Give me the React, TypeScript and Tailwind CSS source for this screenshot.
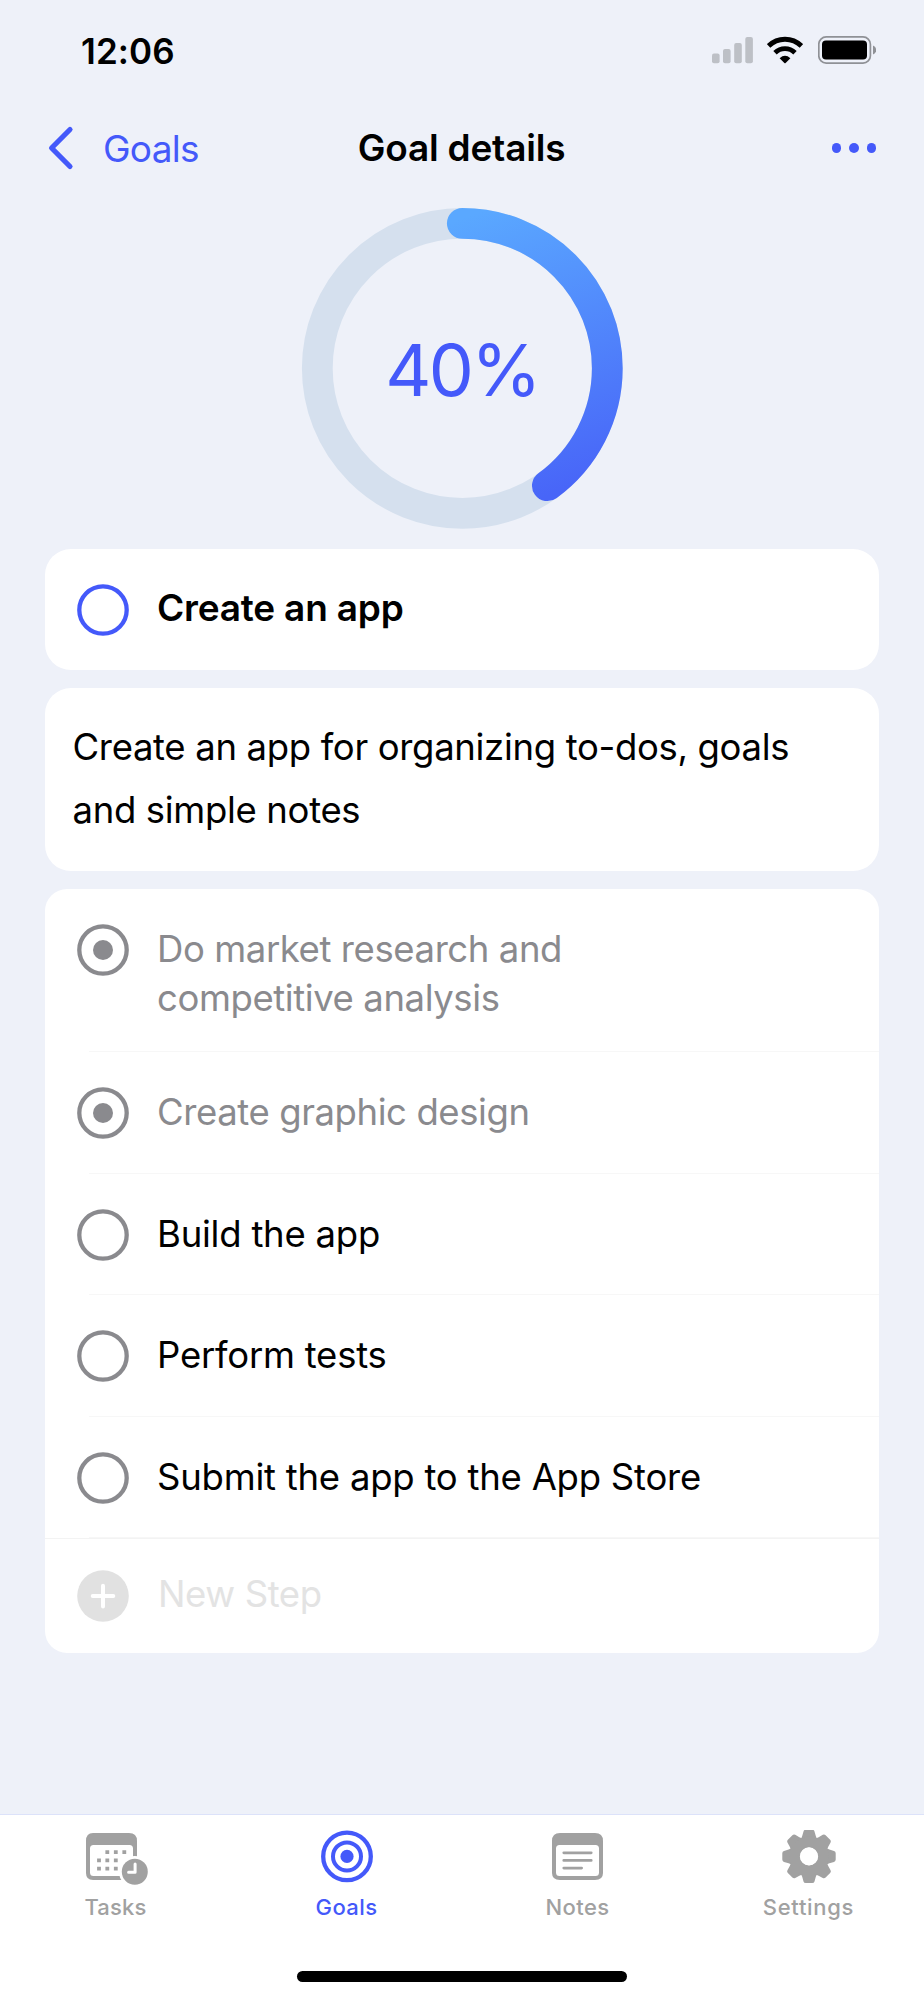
import React from "react";

const steps = [
  { title: "Do market research and\ncompetitive analysis", done: true },
  { title: "Create graphic design", done: true },
  { title: "Build the app", done: false },
  { title: "Perform tests", done: false },
  { title: "Submit the app to the App Store", done: false },
];

function StatusBar() {
  return (
    <div className="flex h-[100px] items-center justify-between pl-[81px] pr-[48px]">
      <span className="pt-px text-[35px] leading-[50px] font-semibold tracking-[0.1px]">12:06</span>
      <div className="flex items-center">
        <svg width="41" height="28" viewBox="0 0 41 28" fill="#bdc0c6" className="mr-[14px]">
          <rect x="0" y="17.5" width="7.6" height="9.8" rx="2" />
          <rect x="11" y="13" width="7.6" height="14.3" rx="2" />
          <rect x="22.2" y="7" width="7.6" height="20.3" rx="2" />
          <rect x="33.3" y="1" width="7.6" height="26.3" rx="2" />
        </svg>
        <svg width="36" height="28" viewBox="0 0 36 28" className="mr-[15px]">
          <path d="M1.6 9.9A23.4 23.4 0 0 1 34.4 9.9" fill="none" stroke="#000" strokeWidth="4.9" />
          <path d="M8 16.7A14.4 14.4 0 0 1 28 16.7" fill="none" stroke="#000" strokeWidth="4.9" />
          <path d="M12.6 22.2Q18 17.4 23.4 22.2L18.6 27Q18 27.6 17.4 27Z" fill="#000" />
        </svg>
        <svg width="58" height="28" viewBox="0 0 58 28">
          <rect x="0.8" y="0.9" width="51.6" height="26.2" rx="7.4" fill="none" stroke="#8f9196" strokeWidth="1.7" />
          <rect x="4" y="4.6" width="45" height="18.8" rx="4" fill="#000" />
          <path d="M55 9.5Q58.2 10.9 58.2 14T55 18.5Z" fill="#8f9196" />
        </svg>
      </div>
    </div>
  );
}

function NavBar() {
  return (
    <div className="grid h-[96px] grid-cols-3 items-center pr-[48px] pl-[47px]">
      <div className="flex items-center">
        <svg width="27" height="46" viewBox="0 0 27 46" fill="none">
          <path d="M23 4.5L4.6 23L23 41.5" stroke="#4459fa" strokeWidth="5.2" strokeLinecap="round" strokeLinejoin="round" />
        </svg>
        <span className="ml-[29px] pt-px text-[37px] leading-[50px] tracking-[-0.75px] text-[#4459fa]">Goals</span>
      </div>
      <h1 className="text-center text-[37px] leading-[50px] font-semibold tracking-[-0.2px] whitespace-nowrap">Goal details</h1>
      <div className="flex justify-end gap-[8px]">
        <span className="h-[9.4px] w-[9.4px] rounded-full bg-[#4459fa]" />
        <span className="h-[9.4px] w-[9.4px] rounded-full bg-[#4459fa]" />
        <span className="h-[9.4px] w-[9.4px] rounded-full bg-[#4459fa]" />
      </div>
    </div>
  );
}

function ProgressRing({ percent }: { percent: number }) {
  const r = 145;
  const length = 2 * Math.PI * r;
  return (
    <div className="mx-auto mt-[11px] grid h-[322px] w-[322px] place-items-center">
      <svg width="322" height="322" viewBox="0 0 322 322" fill="none" className="col-start-1 row-start-1">
        <defs>
          {/* turned back by 90deg because the arc itself is rotated */}
          <linearGradient
            id="ring"
            gradientUnits="userSpaceOnUse"
            x1="150"
            y1="15"
            x2="246"
            y2="290"
            gradientTransform="rotate(90 161.3 161.3)"
          >
            <stop offset="0" stopColor="#5aa8ff" />
            <stop offset="1" stopColor="#4865f8" />
          </linearGradient>
        </defs>
        <circle cx="161.3" cy="161.3" r={r} stroke="#d5e0ee" strokeWidth="30.8" />
        <circle
          cx="161.3"
          cy="161.3"
          r={r}
          stroke="url(#ring)"
          strokeWidth="30.8"
          strokeLinecap="round"
          strokeDasharray={`${(length * percent) / 100} ${length}`}
          transform="rotate(-90 161.3 161.3)"
        />
      </svg>
      <span className="col-start-1 row-start-1 pt-[3px] text-[71.5px] leading-[90px] tracking-[-2.7px] text-[#4459fa]">{percent}%</span>
    </div>
  );
}

function StepCircle({ done, color }: { done?: boolean; color: string }) {
  return (
    <svg width="52" height="52" viewBox="0 0 52 52" className="shrink-0">
      <circle cx="26" cy="26" r="23.7" fill="none" stroke={color} strokeWidth="4.3" />
      {done && <circle cx="26" cy="26" r="10" fill={color} />}
    </svg>
  );
}

function TasksIcon() {
  return (
    <svg width="64" height="56" viewBox="-1 0 64 56" fill="#a1a1a1">
      <path fillRule="evenodd" d="M8 3H44Q52 3 52 11V43Q52 50 44 50H8Q1 50 1 43V11Q1 3 8 3ZM8.5 15Q5 15 5 18.5V42.5Q5 46 8.5 46H44.5Q48 46 48 42.5V18.5Q48 15 44.5 15Z" />
      <path d="M20.4 20.2h3.8v3.8h-3.8zM28.9 20.2h3.8v3.8h-3.8zM37.4 20.2h3.8v3.8h-3.8zM12.1 28.4h3.8v3.8h-3.8zM20.4 28.4h3.8v3.8h-3.8zM28.9 28.4h3.8v3.8h-3.8zM12.1 36.8h3.8v3.8h-3.8zM20.4 36.8h3.8v3.8h-3.8zM28.9 36.8h3.8v3.8h-3.8z" />
      <circle cx="49.8" cy="41.7" r="15.8" fill="#fff" />
      <circle cx="49.8" cy="41.7" r="13" />
      <path d="M50.1 34V42.2H43.6" fill="none" stroke="#fff" strokeWidth="3" strokeLinecap="round" strokeLinejoin="round" />
    </svg>
  );
}

function GoalsIcon() {
  return (
    <svg width="64" height="56" viewBox="0 0 64 56" fill="none" stroke="#4459fa">
      <circle cx="32" cy="26.4" r="23.8" strokeWidth="4.3" />
      <circle cx="32" cy="26.4" r="14" strokeWidth="4" />
      <circle cx="32" cy="26.4" r="6.6" fill="#4459fa" stroke="none" />
    </svg>
  );
}

function NotesIcon() {
  return (
    <svg width="64" height="56" viewBox="0 0 64 56" fill="#a1a1a1">
      <path fillRule="evenodd" d="M14 3H49Q57 3 57 11V43Q57 50 49 50H14Q6 50 6 43V11Q6 3 14 3ZM13.5 15Q10 15 10 18.5V42.5Q10 46 13.5 46H49.5Q53 46 53 42.5V18.5Q53 15 49.5 15Z" />
      <path d="M17.8 22.8H45.2M17.8 30.4H45.2M17.8 38.1H35.6" stroke="#a1a1a1" strokeWidth="2.8" strokeLinecap="round" />
    </svg>
  );
}

function SettingsIcon() {
  return (
    <svg width="64" height="56" viewBox="0 0 64 56" fill="#a1a1a1">
      <g transform="translate(32 26.4)">
        {[0, 45, 90, 135, 180, 225, 270, 315].map((angle) => (
          <path
            key={angle}
            transform={`rotate(${angle})`}
            d="M-8.6 -17Q-7.3 -18.6 -6.8 -20.4L-5.5 -25Q-5 -26.7 -3.2 -26.7H3.2Q5 -26.7 5.5 -25L6.8 -20.4Q7.3 -18.6 8.6 -17Z"
          />
        ))}
        <circle r="14.2" fill="none" stroke="#a1a1a1" strokeWidth="10.8" />
        <circle r="9.1" fill="#fff" />
      </g>
    </svg>
  );
}

const tabs = [
  { label: "Tasks", icon: <TasksIcon />, style: "tracking-[0.2px] text-[#a1a1a1]" },
  { label: "Goals", icon: <GoalsIcon />, style: "tracking-[0.4px] text-[#4459fa]" },
  { label: "Notes", icon: <NotesIcon />, style: "tracking-[0.4px] text-[#a1a1a1]" },
  { label: "Settings", icon: <SettingsIcon />, style: "tracking-[0.7px] text-[#a1a1a1]" },
];

function TabBar() {
  return (
    <div className="flex h-[186px] flex-col border-t border-[#dce2fa] bg-white">
      <div className="grid grid-cols-4 pt-[15px]">
        {tabs.map((tab) => (
          <div key={tab.label} className="flex flex-col items-center">
            {tab.icon}
            <span className={`mt-[6px] text-[22px] leading-[30px] font-medium ${tab.style}`}>{tab.label}</span>
          </div>
        ))}
      </div>
      <div className="mx-auto mt-auto mb-[18px] h-[11px] w-[330px] rounded-full bg-black" />
    </div>
  );
}

function App() {
  return (
    <div className="flex h-[2000px] w-[924px] flex-col bg-[#eef1f9] font-['Inter',sans-serif] text-black">
      <StatusBar />
      <NavBar />
      <ProgressRing percent={40} />
      <div className="mx-[45px] mt-[20px] flex h-[121px] items-center rounded-[26px] bg-white pl-[32px]">
        <StepCircle color="#4459fa" />
        <span className="ml-[28px] pb-[4px] text-[37px] leading-[50px] font-semibold tracking-[-0.2px]">Create an app</span>
      </div>
      <div className="mx-[45px] mt-[18px] h-[183px] rounded-[26px] bg-white pt-[28px] pl-[27.5px] text-[36.5px] leading-[63.3px] tracking-[-0.33px] whitespace-pre-line">
        {"Create an app for organizing to-dos, goals\nand simple notes"}
      </div>
      <div className="mx-[45px] mt-[18px] h-[764px] rounded-[22px] bg-white">
        {steps.map((step) => (
          <div key={step.title}>
            <div className="flex min-h-[120.4px] pt-[35px] pb-[27.6px] pl-[32px]">
              <StepCircle done={step.done} color="#8a8a8e" />
              <span
                className={`ml-[28px] pt-px text-[36.5px] leading-[49.4px] whitespace-pre-line ${
                  step.done ? "tracking-[-0.41px] text-[#8a8a8e]" : "tracking-[-0.23px] text-black"
                }`}
              >
                {step.title}
              </span>
            </div>
            <div className="ml-[44px] h-px bg-[#f7f7f7]" />
          </div>
        ))}
        <div className="flex h-[115px] items-center border-t border-[#f3f3f3] pl-[32px]">
          <svg width="52" height="52" viewBox="0 0 52 52">
            <circle cx="26" cy="26" r="25.8" fill="#e1e1e1" />
            <path d="M26 15.8V36.4M15.7 26H36.3" stroke="#fff" strokeWidth="4" strokeLinecap="round" />
          </svg>
          <span className="ml-[29px] pb-[3px] text-[36.5px] leading-[50px] tracking-[-0.4px] text-[#e3e3e3]">New Step</span>
        </div>
      </div>
      <div className="mt-auto">
        <TabBar />
      </div>
    </div>
  );
}

export default App;
